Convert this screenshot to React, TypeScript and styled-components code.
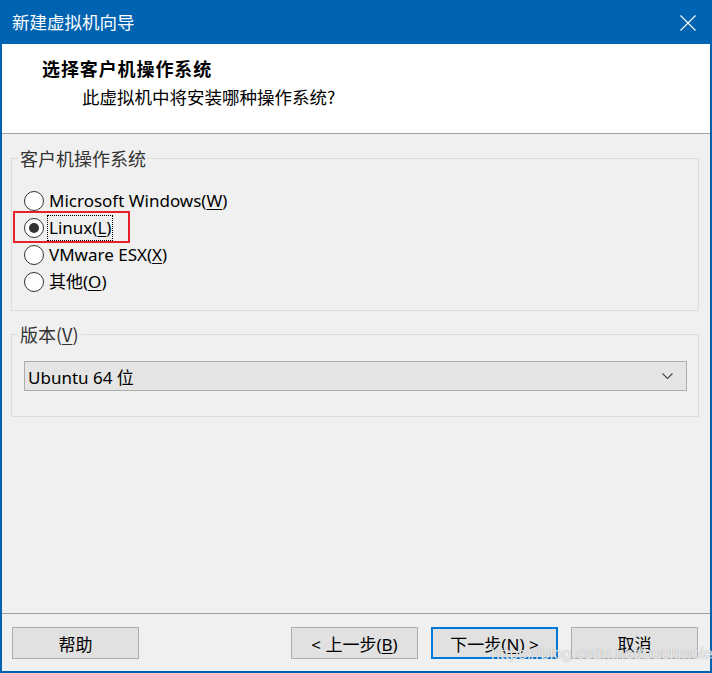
import styled, { createGlobalStyle } from 'styled-components'

const GlobalStyle = createGlobalStyle`
  html, body { margin:0; padding:0; background:#fff; }
  body { font-family: "Noto Sans", "Noto Sans CJK SC", sans-serif; color:#000; }
  * { box-sizing: border-box; }
`

const blue = '#0063B1'
const panel = '#F0F0F0'

const options = [
  { label: 'Microsoft Windows(', key: 'W' },
  { label: 'Linux(', key: 'L', checked: true },
  { label: 'VMware ESX(', key: 'X' },
  { label: '其他(', key: 'O' },
]

function App() {
  return (
    <>
      <GlobalStyle />
      <Window>
        <TitleBar>
          <Title>新建虚拟机向导</Title>
          <CloseBtn>
            <svg width="16" height="16" viewBox="0 0 16 16">
              <path d="M0.5 0.5 L15.5 15.5 M15.5 0.5 L0.5 15.5" stroke="#fff" strokeWidth="1.1" />
            </svg>
          </CloseBtn>
        </TitleBar>
        <Header>
          <HeaderTitle>选择客户机操作系统</HeaderTitle>
          <HeaderSub>此虚拟机中将安装哪种操作系统?</HeaderSub>
        </Header>
        <Body>
          <Group>
            <Legend>客户机操作系统</Legend>
            <OptionList>
              {options.map((o) => (
                <OptionRow key={o.key}>
                  <Radio $checked={!!o.checked} />
                  <OptionLabel $focused={!!o.checked}>
                    {o.label}<u>{o.key}</u>)
                  </OptionLabel>
                  {o.checked && <Highlight />}
                </OptionRow>
              ))}
            </OptionList>
          </Group>
          <Group $gap>
            <Legend>版本(<u>V</u>)</Legend>
            <Select>
              <span>Ubuntu 64 位</span>
              <svg width="11" height="7" viewBox="0 0 11 7">
                <path d="M0.5 0.5 L5.5 5.5 L10.5 0.5" stroke="#444" strokeWidth="1.1" fill="none" />
              </svg>
            </Select>
          </Group>
        </Body>
        <Footer>
          <Button>帮助</Button>
          <Spacer />
          <Button>&lt; 上一步(<u>B</u>)</Button>
          <Button $primary>下一步(<u>N</u>) &gt;</Button>
          <Button>取消</Button>
          <Watermark>https://blog.csdn.net/buckmole</Watermark>
        </Footer>
      </Window>
    </>
  )
}

const Window = styled.div`
  width:712px;
  height:673px;
  display:flex;
  flex-direction:column;
  border-left:2px solid ${blue};
  border-right:2px solid ${blue};
  border-bottom:2px solid ${blue};
  background:${panel};
`
const TitleBar = styled.div`
  height:44px;
  margin:0 -2px;
  padding:0 16px 0 12px;
  background:${blue};
  display:flex;
  align-items:center;
  justify-content:space-between;
`
const Title = styled.div`
  color:#fff;
  font-family:"Noto Sans CJK SC", sans-serif;
  font-size:17.5px;
  line-height:20px;
`
const CloseBtn = styled.div`
  display:flex;
  margin-top:1px;
`
const Header = styled.div`
  height:90px;
  background:#fff;
  border-bottom:1px solid #A0A0A0;
  padding-top:14px;
`
const HeaderTitle = styled.div`
  margin-left:40px;
  font-family:"Noto Sans CJK SC", sans-serif;
  font-weight:700;
  font-size:18px;
  letter-spacing:0.9px;
  line-height:20px;
`
const HeaderSub = styled.div`
  margin-left:80px;
  margin-top:9px;
  font-family:"Noto Sans CJK SC", sans-serif;
  font-size:17.5px;
  line-height:20px;
`
const Body = styled.div`
  flex:1;
  padding:14px 11px 0 9px;
`
const Group = styled.fieldset<{ $gap?: boolean }>`
  margin:${(p) => (p.$gap ? '13px 0 0' : '0')};
  padding:0;
  min-width:0;
  border:1px solid #DCDCDC;
`
const Legend = styled.legend`
  margin-left:6px;
  padding:0 2px;
  font-family:"Noto Sans CJK SC", sans-serif;
  font-size:18px;
  line-height:20px;
  color:#333;
  u { text-underline-offset:2px; }
`
const OptionList = styled.div`
  padding:19px 0 15px 12px;
`
const OptionRow = styled.div`
  position:relative;
  height:27px;
  display:flex;
  align-items:center;
  gap:4px;
`
const Radio = styled.span<{ $checked: boolean }>`
  width:20px;
  height:20px;
  border-radius:50%;
  border:1px solid #333;
  background:#fff;
  display:flex;
  align-items:center;
  justify-content:center;
  &::after {
    content:'';
    display:${(p) => (p.$checked ? 'block' : 'none')};
    width:10px;
    height:10px;
    border-radius:50%;
    background:#333;
  }
`
const OptionLabel = styled.span<{ $focused: boolean }>`
  font-family:"Noto Sans", "Noto Sans CJK SC", sans-serif;
  font-size:17px;
  line-height:24px;
  padding:0 1px;
  outline:${(p) => (p.$focused ? '1px dotted #000' : 'none')};
  outline-offset:0;
  u { text-underline-offset:2px; }
`
const Highlight = styled.span`
  position:absolute;
  left:-11px;
  top:-3px;
  width:117px;
  height:32px;
  border:2px solid #E8202A;
  pointer-events:none;
`
const Select = styled.div`
  margin:17px 11px 25px 12px;
  height:30px;
  background:#E5E5E5;
  border:1px solid #ADADAD;
  display:flex;
  align-items:center;
  justify-content:space-between;
  padding:0 13px 0 3px;
  font-family:"Noto Sans", "Noto Sans CJK SC", sans-serif;
  font-size:17px;
`
const Footer = styled.div`
  position:relative;
  height:58px;
  border-top:1px solid #A0A0A0;
  padding:13px 12px 0 10px;
  display:flex;
  align-items:flex-start;
  gap:13px;
`
const Spacer = styled.div`
  flex:1;
`
const Button = styled.button<{ $primary?: boolean }>`
  width:127px;
  height:32px;
  background:#E1E1E1;
  border:${(p) => (p.$primary ? '2px solid #0078D7' : '1px solid #ADADAD')};
  padding:0;
  font-family:"Noto Sans", "Noto Sans CJK SC", sans-serif;
  font-size:17px;
  color:#000;
  u { text-underline-offset:2px; }
`
const Watermark = styled.div`
  position:absolute;
  left:489px;
  top:30px;
  font-family:"Liberation Sans", sans-serif;
  font-size:16px;
  line-height:19px;
  letter-spacing:0.2px;
  white-space:nowrap;
  color:rgba(255,255,255,0.8);
  text-shadow:0 0 1px rgba(110,110,110,0.7);
  pointer-events:none;
`

export default App
